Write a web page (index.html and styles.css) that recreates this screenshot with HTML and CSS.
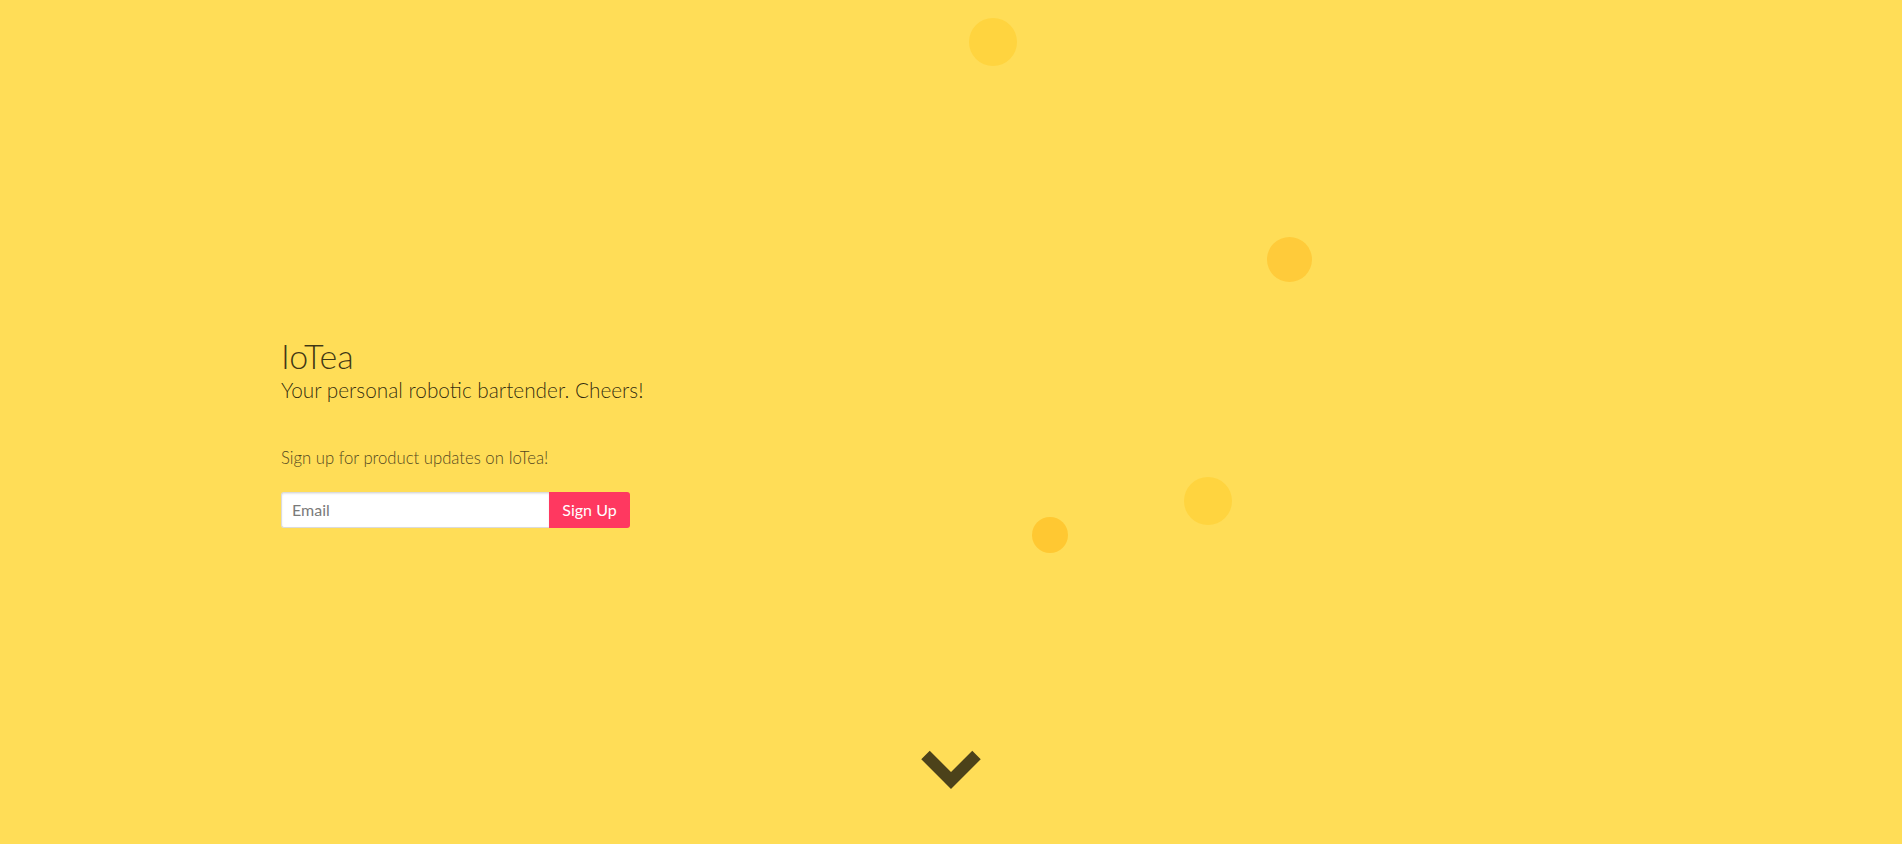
FILE: index.html
```html
<!DOCTYPE html>
<html lang="en">
<head>
<meta charset="utf-8">
<title>IoTea</title>
<link rel="stylesheet" href="styles.css">
</head>
<body>
<section class="hero">
  <div class="bubbles" aria-hidden="true">
    <span class="bubble bubble-a"></span>
    <span class="bubble bubble-b"></span>
    <span class="bubble bubble-c"></span>
    <span class="bubble bubble-d"></span>
  </div>
  <div class="hero-body">
    <div class="container">
      <h1 class="title">IoTea</h1>
      <h2 class="subtitle">Your personal robotic bartender. Cheers!</h2>
      <p class="signup-text">Sign up for product updates on IoTea!</p>
      <form class="signup">
        <input class="signup-input" type="email" placeholder="Email">
        <button class="signup-button" type="button">Sign Up</button>
      </form>
    </div>
  </div>
  <div class="hero-foot">
    <svg class="chevron" width="60" height="42" viewBox="0 0 60 42">
      <polyline points="4.5,7 30,32.5 55.5,7" fill="none" stroke="#4c421a" stroke-width="12" stroke-linejoin="miter" stroke-linecap="butt"/>
    </svg>
  </div>
</section>
</body>
</html>
```
FILE: styles.css
```css
* { box-sizing: border-box; }
html, body { margin: 0; padding: 0; }
body {
  font-family: Lato, "Open Sans", sans-serif;
  background: #ffdd57;
  color: rgba(0,0,0,0.7);
}
.hero {
  position: relative;
  height: 844px;
  overflow: hidden;
  display: flex;
  flex-direction: column;
  background: #ffdd57;
}
.bubbles { position: absolute; inset: 0; }
.bubble { position: absolute; border-radius: 50%; }
.bubble-a { left: 969px; top: 18px; width: 48px; height: 48px; background: #ffd43f; }
.bubble-b { left: 1267px; top: 237px; width: 45px; height: 45px; background: #ffcb3a; }
.bubble-c { left: 1184px; top: 477px; width: 48px; height: 48px; background: #ffd43f; }
.bubble-d { left: 1032px; top: 517px; width: 36px; height: 36px; background: #ffc832; }
.hero-body {
  position: relative;
  flex: 1;
  display: flex;
  align-items: flex-start;
  padding-top: 338px;
}
.container {
  width: 1344px;
  margin: 0 auto;
  padding-left: 2px;
}
.title {
  margin: 0;
  font-size: 34px;
  font-weight: 300;
  line-height: 36px;
  color: rgba(0,0,0,0.75);
}
.subtitle {
  margin: 3px 0 0;
  font-size: 20.8px;
  font-weight: 300;
  line-height: 25.6px;
  color: rgba(0,0,0,0.82);
}
.signup-text {
  margin: 43px 0 0;
  font-size: 16.7px;
  font-weight: 300;
  line-height: 25px;
  color: #55491f;
}
.signup {
  display: flex;
  margin-top: 21px;
}
.signup-input {
  width: 268px;
  height: 36px;
  padding: 0 10px;
  border: 1px solid #dbdbdb;
  border-right: 0;
  border-radius: 3px 0 0 3px;
  background: #fff;
  font-family: inherit;
  font-size: 16px;
  color: #363636;
  box-shadow: inset 0 1px 2px rgba(10,10,10,0.1);
}
.signup-input::placeholder { color: #7a7a7a; }
.signup-button {
  width: 81px;
  height: 36px;
  border: 0;
  border-radius: 0 3px 3px 0;
  background: #ff3860;
  color: #fff;
  font-family: inherit;
  font-size: 16px;
}
.hero-foot {
  position: relative;
  display: flex;
  justify-content: center;
  padding-bottom: 54px;
}
.chevron { display: block; }
```
